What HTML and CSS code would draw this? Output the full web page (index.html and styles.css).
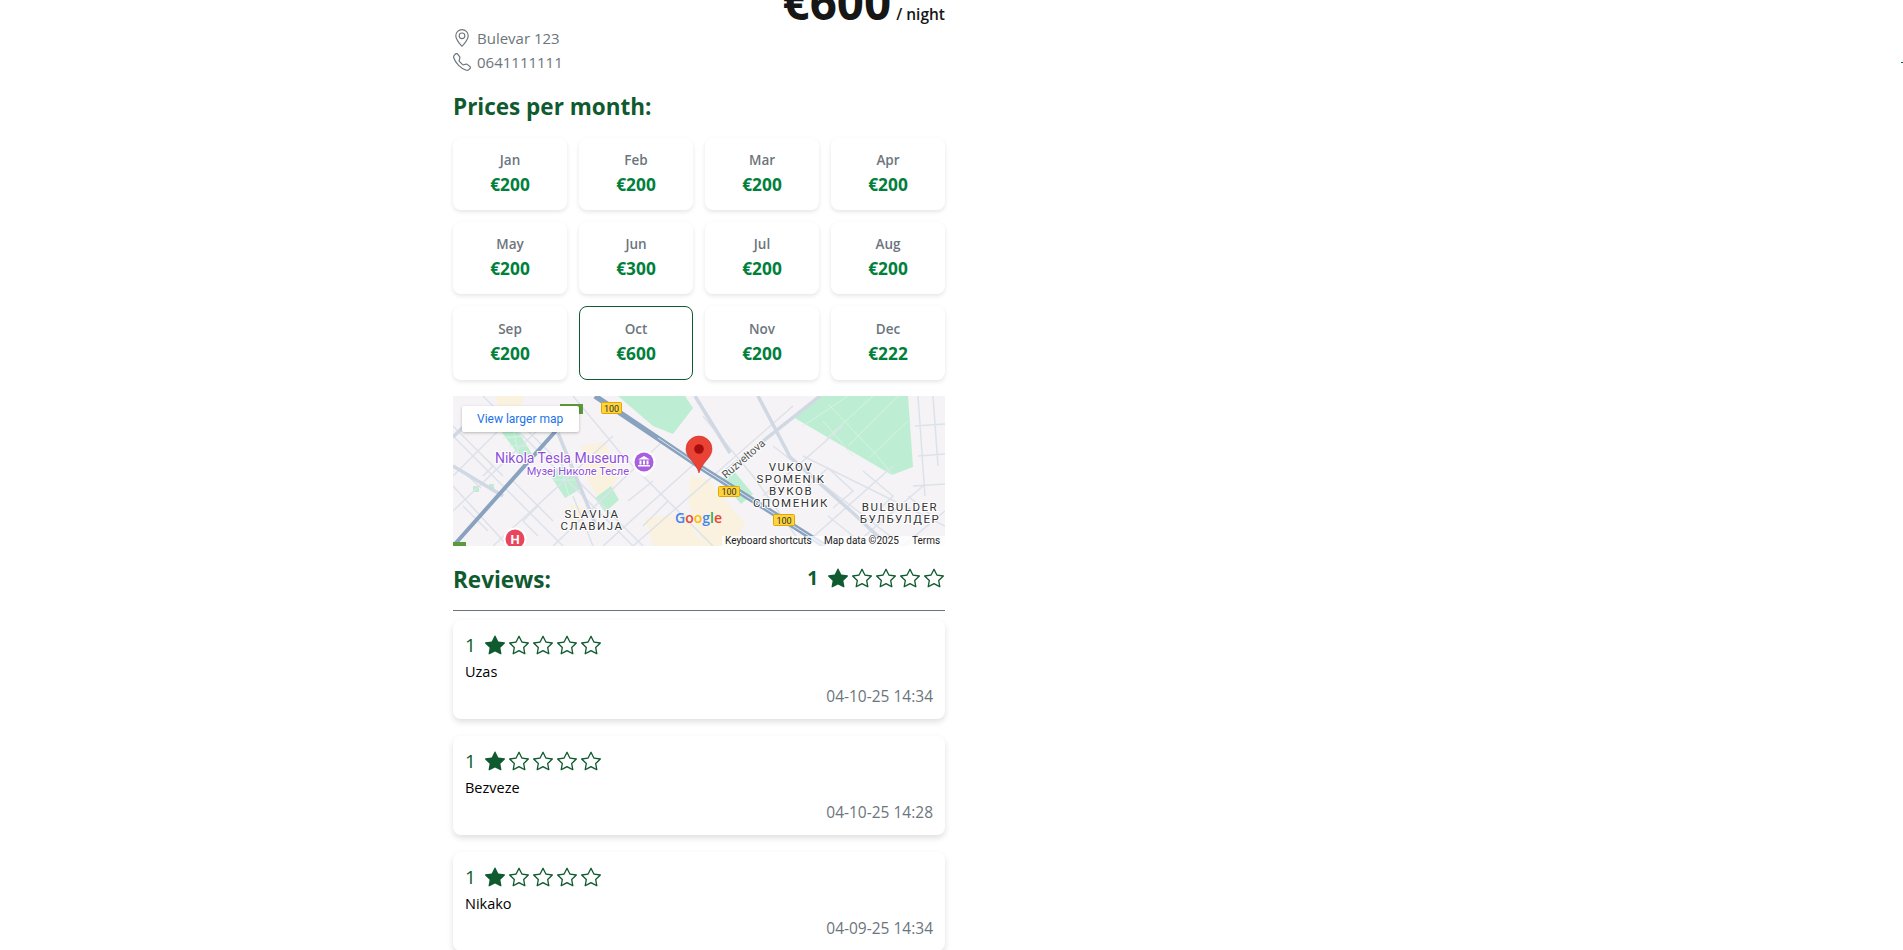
FILE: index.html

```html
<!DOCTYPE html>
<html lang="en">
<head>
    <meta charset="UTF-8">
    <title>Apartment details</title>
    <link rel="stylesheet" href="styles.css">
</head>
<body>
    <svg width="0" height="0" class="defs">
        <symbol id="star" viewBox="0 0 16 16"><path d="M2.866 14.85c-.078.444.36.791.746.593l4.39-2.256 4.389 2.256c.386.198.824-.149.746-.592l-.83-4.73 3.522-3.356c.33-.314.16-.888-.282-.95l-4.898-.696L8.465.792a.513.513 0 0 0-.927 0L5.354 5.12l-4.898.696c-.441.062-.612.636-.283.95l3.523 3.356-.83 4.73zm4.905-2.767-3.686 1.894.694-3.957a.565.565 0 0 0-.163-.505L1.71 6.745l4.052-.576a.525.525 0 0 0 .393-.288L8 2.223l1.847 3.658a.525.525 0 0 0 .393.288l4.052.575-2.906 2.77a.565.565 0 0 0-.163.506l.694 3.957-3.686-1.894a.503.503 0 0 0-.461 0z"/></symbol>
        <symbol id="star-fill" viewBox="0 0 16 16"><path d="M3.612 15.443c-.386.198-.824-.149-.746-.592l.83-4.73L.173 6.765c-.329-.314-.158-.888.283-.95l4.898-.696L7.538.792c.197-.39.73-.39.927 0l2.184 4.327 4.898.696c.441.062.612.636.282.95l-3.522 3.356.83 4.73c.078.443-.36.79-.746.592L8 13.187l-4.389 2.256z"/></symbol>
    </svg>

    <div class="page">
        <div class="price-row"><span class="price">€600</span><span class="per-night">/ night</span></div>

        <div class="contact">
            <svg class="contact-icon" viewBox="0 0 16 16"><path d="M12.166 8.94c-.524 1.062-1.234 2.12-1.96 3.07A31.493 31.493 0 0 1 8 14.58a31.481 31.481 0 0 1-2.206-2.57c-.726-.95-1.436-2.008-1.96-3.07C3.304 7.867 3 6.862 3 6a5 5 0 0 1 10 0c0 .862-.305 1.867-.834 2.94zM8 16s6-5.686 6-10A6 6 0 0 0 2 6c0 4.314 6 10 6 10z"/><path d="M8 8a2 2 0 1 1 0-4 2 2 0 0 1 0 4zm0 1a3 3 0 1 0 0-6 3 3 0 0 0 0 6z"/></svg>
            <span>Bulevar 123</span>
        </div>
        <div class="contact">
            <svg class="contact-icon" viewBox="0 0 16 16"><path d="M3.654 1.328a.678.678 0 0 0-1.015-.063L1.605 2.3c-.483.484-.661 1.169-.45 1.77a17.568 17.568 0 0 0 4.168 6.608 17.569 17.569 0 0 0 6.608 4.168c.601.211 1.286.033 1.77-.45l1.034-1.034a.678.678 0 0 0-.063-1.015l-2.307-1.794a.678.678 0 0 0-.58-.122l-2.19.547a1.745 1.745 0 0 1-1.657-.459L5.482 8.062a1.745 1.745 0 0 1-.46-1.657l.548-2.19a.678.678 0 0 0-.122-.58L3.654 1.328zM1.884.511a1.745 1.745 0 0 1 2.612.163L6.29 2.98c.329.423.445.974.315 1.494l-.547 2.19a.678.678 0 0 0 .178.643l2.457 2.457a.678.678 0 0 0 .644.178l2.189-.547a1.745 1.745 0 0 1 1.494.315l2.306 1.794c.829.645.905 1.87.163 2.611l-1.034 1.034c-.74.74-1.846 1.065-2.877.702a18.634 18.634 0 0 1-7.01-4.42 18.634 18.634 0 0 1-4.42-7.009c-.362-1.03-.037-2.137.703-2.877L1.885.511z"/></svg>
            <span>0641111111</span>
        </div>

        <h2 class="section-title months-title">Prices per month:</h2>
        <div class="months">
            <div class="month"><div class="month-name">Jan</div><div class="month-price">€200</div></div>
            <div class="month"><div class="month-name">Feb</div><div class="month-price">€200</div></div>
            <div class="month"><div class="month-name">Mar</div><div class="month-price">€200</div></div>
            <div class="month"><div class="month-name">Apr</div><div class="month-price">€200</div></div>
            <div class="month"><div class="month-name">May</div><div class="month-price">€200</div></div>
            <div class="month"><div class="month-name">Jun</div><div class="month-price">€300</div></div>
            <div class="month"><div class="month-name">Jul</div><div class="month-price">€200</div></div>
            <div class="month"><div class="month-name">Aug</div><div class="month-price">€200</div></div>
            <div class="month"><div class="month-name">Sep</div><div class="month-price">€200</div></div>
            <div class="month active"><div class="month-name">Oct</div><div class="month-price">€600</div></div>
            <div class="month"><div class="month-name">Nov</div><div class="month-price">€200</div></div>
            <div class="month"><div class="month-name">Dec</div><div class="month-price">€222</div></div>
        </div>

        <div class="map">
            <svg class="map-canvas" viewBox="0 0 492 150" width="492" height="150">
                <rect width="492" height="150" fill="#f5f3f5"/>
                <!-- parks and built-up areas -->
                <g fill="#faf2de">
                    <polygon points="128,50 152,46 165,80 150,110 135,85"/>
                    <polygon points="192,122 232,118 250,150 200,150"/>
                    <polygon points="237,80 256,84 292,128 280,150 250,150 236,108"/>
                    <polygon points="42,0 72,0 64,16 46,12"/>
                    <polygon points="118,108 132,112 130,128 116,124"/>
                </g>
                <g fill="#bdeed3">
                    <polygon points="340,21 367,0 455,0 460,71 439,79"/>
                    <polygon points="165,0 232,0 240,12 220,38 200,30"/>
                    <polygon points="47,34 62,30 79,58 68,62"/>
                    <polygon points="95,76 112,70 129,92 112,102"/>
                    <polygon points="268,84 280,74 300,98 288,108"/>
                    <polygon points="142,102 158,90 166,104 152,116"/>
                    <rect x="20" y="90" width="6" height="6"/>
                    <rect x="36" y="88" width="5" height="5"/>
                </g>
                <!-- paths across the parks -->
                <g stroke="#d6f3e2" stroke-width="1" fill="none">
                    <path d="M375 8 L420 55 L440 79 M395 0 L350 30 M420 0 L372 44 M445 0 L395 50 M455 25 L416 62 M370 25 L400 60"/>
                    <path d="M50 42 L72 40 M56 50 L76 50 M60 32 L66 60 M100 84 L124 84 M108 74 L116 100"/>
                </g>
                <!-- street grid -->
                <g stroke="#dde2ea" stroke-width="1.500" fill="none">
                    <path d="M0 40 L110 150 M0 90 L55 150 M30 0 L180 150 M70 30 L190 150 M120 0 L170 60 L260 150"/>
                    <path d="M0 80 L70 10 M0 115 L110 10 M40 150 L160 40 M100 150 L210 45 M150 150 L250 60 M180 150 L340 10"/>
                    <path d="M320 50 L450 150 M350 60 L492 130 M250 20 L300 80 L350 150"/>
                    <path d="M350 150 L440 70 M400 150 L470 90 M310 100 L390 30 M450 150 L492 115 M465 0 L472 100 M480 0 L485 70 M462 30 L492 28 M465 60 L492 58 M460 90 L492 88"/>
                    <path d="M0 30 L40 70 L30 80 M60 85 L100 125 M10 110 L35 135 M120 100 L140 150"/>
                    <path d="M355 90 L375 72 L400 95 L380 112 M410 75 L440 100 L425 115 M375 120 L400 140 M455 100 L485 125 M30 60 L50 80 M15 80 L28 92 M85 110 L70 125 L85 140 M175 105 L200 85 M190 130 L215 105"/>
                </g>
                <g stroke="#cfd8e3" stroke-width="3.500" fill="none">
                    <path d="M305 0 L337 61 L400 117 L430 145"/>
                    <path d="M270 77 L367 0"/>
                    <path d="M242 0 L277 57"/>
                    <path d="M105 37 L142 127"/>
                    <path d="M0 41 L25 17"/>
                    <path d="M0 70 L50 100"/>
                </g>
                <!-- main roads -->
                <g stroke="#88a2bf" fill="none">
                    <path d="M142 0 L252 74 L372 150" stroke-width="5.500"/>
                    <path d="M2 148 L125 10" stroke-width="4"/>
                </g>
                <path d="M205 42 L252 74 L372 150" stroke="#dfe6ee" stroke-width="1" fill="none"/>
                <!-- road shields -->
                <g>
                    <rect x="107" y="8" width="23" height="10" fill="#5b9a3c"/>
                    <rect x="0" y="146" width="13" height="6" fill="#5b9a3c"/>
                </g>
                <g fill="#fdd43b" stroke="#e0a800" stroke-width="1">
                    <rect x="148.500" y="6.500" width="20" height="11" rx="1"/>
                    <rect x="265.500" y="90.500" width="21" height="10" rx="1"/>
                    <rect x="320.500" y="118.500" width="21" height="11" rx="1"/>
                </g>
                <g class="map-shield-text">
                    <text x="158.500" y="15.500">100</text>
                    <text x="276" y="99">100</text>
                    <text x="331" y="128">100</text>
                </g>
                <!-- labels -->
                <g>
                    <text x="176" y="67" class="museum-en">Nikola Tesla Museum</text>
                    <text x="176" y="79" class="museum-sr">Музеј Николе Тесле</text>
                </g>
                <circle cx="191" cy="66" r="11.500" fill="#fff"/>
                <path d="M186 77 L191 81 L196 77 Z" fill="#fff"/>
                <circle cx="191" cy="66" r="9.500" fill="#a95ee0"/>
                <path d="M185 63.500 L191 60 L197 63.500 Z M186.500 64.500 h2 v4 h-2 Z M190 64.500 h2 v4 h-2 Z M193.500 64.500 h2 v4 h-2 Z M185 69 h12 v1.500 h-12 Z" fill="#fff"/>
                <g class="map-area">
                    <text x="139" y="122">SLAVIJA</text>
                    <text x="139" y="134">СЛАВИЈА</text>
                    <text x="338" y="75">VUKOV</text>
                    <text x="338" y="87">SPOMENIK</text>
                    <text x="338" y="99">ВУКОВ</text>
                    <text x="338" y="111">СПОМЕНИК</text>
                    <text x="447" y="115">BULBULDER</text>
                    <text x="447" y="127">БУЛБУЛДЕР</text>
                </g>
                <text class="map-street" transform="translate(273 83) rotate(-41)">Ruzveltova</text>
                <!-- hospital -->
                <circle cx="62" cy="143" r="11.500" fill="#fff"/>
                <circle cx="62" cy="143" r="9.500" fill="#e9455c"/>
                <text x="62" y="147.500" class="map-hospital">H</text>
                <!-- marker -->
                <path d="M246 77 C243 66 233 62 233 53 A13 13 0 0 1 259 53 C259 62 249 66 246 77 Z" fill="#ea4335" stroke="#c5221f" stroke-width=".5"/>
                <circle cx="246" cy="53" r="4.800" fill="#a50e0e"/>
                <text y="127" x="222" class="map-google"><tspan fill="#4285f4">G</tspan><tspan fill="#ea4335">o</tspan><tspan fill="#fbbc04">o</tspan><tspan fill="#4285f4">g</tspan><tspan fill="#34a853">l</tspan><tspan fill="#ea4335">e</tspan></text>
                <!-- attribution bar -->
                <rect x="269" y="140" width="223" height="10" fill="#fff" fill-opacity=".75"/>
                <g class="map-attr">
                    <text x="272" y="147.500">Keyboard shortcuts</text>
                    <text x="371" y="147.500">Map data ©2025</text>
                    <text x="459" y="147.500">Terms</text>
                </g>
            </svg>
            <div class="map-link">View larger map</div>
        </div>

        <div class="reviews-head">
            <h2 class="section-title">Reviews:</h2>
            <div class="rating rating-total">
                <span class="rating-num">1</span>
                <span class="stars">
                    <svg class="star"><use href="#star-fill"/></svg><svg class="star"><use href="#star"/></svg><svg class="star"><use href="#star"/></svg><svg class="star"><use href="#star"/></svg><svg class="star"><use href="#star"/></svg>
                </span>
            </div>
        </div>

        <div class="review">
            <div class="rating">
                <span class="rating-num">1</span>
                <span class="stars">
                    <svg class="star"><use href="#star-fill"/></svg><svg class="star"><use href="#star"/></svg><svg class="star"><use href="#star"/></svg><svg class="star"><use href="#star"/></svg><svg class="star"><use href="#star"/></svg>
                </span>
            </div>
            <div class="review-text">Uzas</div>
            <div class="review-date">04-10-25 14:34</div>
        </div>
        <div class="review">
            <div class="rating">
                <span class="rating-num">1</span>
                <span class="stars">
                    <svg class="star"><use href="#star-fill"/></svg><svg class="star"><use href="#star"/></svg><svg class="star"><use href="#star"/></svg><svg class="star"><use href="#star"/></svg><svg class="star"><use href="#star"/></svg>
                </span>
            </div>
            <div class="review-text">Bezveze</div>
            <div class="review-date">04-10-25 14:28</div>
        </div>
        <div class="review">
            <div class="rating">
                <span class="rating-num">1</span>
                <span class="stars">
                    <svg class="star"><use href="#star-fill"/></svg><svg class="star"><use href="#star"/></svg><svg class="star"><use href="#star"/></svg><svg class="star"><use href="#star"/></svg><svg class="star"><use href="#star"/></svg>
                </span>
            </div>
            <div class="review-text">Nikako</div>
            <div class="review-date">04-09-25 14:34</div>
        </div>
    </div>

    <div class="edge-mark"></div>
</body>
</html>
```

FILE: styles.css

```css
html, body {
    height: 100%;
    overflow: hidden;
}
body {
    margin: 0;
    background: #fff;
    font-family: "Open Sans", "Noto Sans", sans-serif;
    color: #212529;
}
.defs {
    position: absolute;
}
.page {
    width: 492px;
    margin-left: 453px;
}
.price-row {
    display: flex;
    justify-content: flex-end;
    align-items: baseline;
    gap: 5px;
    height: 48px;
    margin-top: -22px;
    line-height: 48px;
}
.price {
    font-size: 47.500px;
    font-weight: 700;
    color: #161616;
}
.per-night {
    font-size: 15.500px;
    font-weight: 600;
    color: #161616;
}
.contact {
    display: flex;
    align-items: center;
    gap: 6px;
    height: 24px;
    font-size: 15px;
    color: #6c757d;
}
.contact-icon {
    width: 18px;
    height: 18px;
    fill: #6c757d;
    flex: none;
}
.section-title {
    margin: 0;
    font-size: 22.500px;
    font-weight: 700;
    color: #0f5a2e;
}
.months-title {
    margin-top: 18px;
    line-height: 30px;
}
.months {
    display: grid;
    grid-template-columns: repeat(4, 1fr);
    gap: 12px;
    margin-top: 16px;
}
.month {
    display: flex;
    flex-direction: column;
    align-items: center;
    justify-content: center;
    gap: 4px;
    min-height: 72px;
    padding-bottom: 2px;
    box-sizing: border-box;
    border-radius: 8px;
    background: #fff;
    box-shadow: 0 2px 4px rgba(0,0,0,0.1);
}
.month.active {
    min-height: 74px;
    border: 1px solid #0f5a2e;
    box-shadow: none;
}
.month-name {
    font-size: 13.500px;
    font-weight: 600;
    color: #6c757d;
}
.month-price {
    font-size: 17.300px;
    font-weight: 700;
    color: #00803a;
}
.map {
    position: relative;
    height: 150px;
    margin-top: 16px;
}
.map-canvas {
    display: block;
}
.map-link {
    position: absolute;
    left: 9px;
    top: 10px;
    width: 117px;
    height: 26px;
    box-sizing: border-box;
    padding-left: 15px;
    border-radius: 2px;
    background: #fff;
    box-shadow: 0 1px 3px rgba(0,0,0,0.25);
    font-family: Roboto, sans-serif;
    font-size: 12px;
    line-height: 26px;
    color: #1a73e8;
}
.map-shield-text text {
    font-family: Roboto, sans-serif;
    font-size: 9px;
    text-anchor: middle;
    fill: #333;
}
.museum-en {
    font-family: Roboto, sans-serif;
    font-size: 14px;
    text-anchor: end;
    fill: #8f4fd8;
    paint-order: stroke;
    stroke: #fff;
    stroke-width: 2px;
}
.museum-sr {
    font-family: Roboto, sans-serif;
    font-size: 11px;
    text-anchor: end;
    fill: #8f4fd8;
    paint-order: stroke;
    stroke: #fff;
    stroke-width: 2px;
}
.map-area text {
    font-family: Roboto, sans-serif;
    font-size: 11.500px;
    letter-spacing: 1.500px;
    text-anchor: middle;
    fill: #333;
    paint-order: stroke;
    stroke: #fff;
    stroke-width: 2px;
}
.map-street {
    font-family: Roboto, sans-serif;
    font-size: 11px;
    fill: #555;
    paint-order: stroke;
    stroke: #fff;
    stroke-width: 2px;
}
.map-hospital {
    font-family: Roboto, sans-serif;
    font-size: 13px;
    font-weight: 700;
    text-anchor: middle;
    fill: #fff;
}
.map-google {
    font-family: "Open Sans", sans-serif;
    font-size: 14px;
    font-weight: 600;
}
.map-attr text {
    font-family: Roboto, sans-serif;
    font-size: 10px;
    fill: #222;
}
.reviews-head {
    display: flex;
    justify-content: space-between;
    align-items: center;
    height: 62px;
    padding-top: 2px;
    border-bottom: 1px solid #6c757d;
}
.reviews-head .rating {
    margin-top: -2px;
}
.rating {
    display: flex;
    align-items: center;
    gap: 9px;
    font-size: 19px;
    color: #0f5a2e;
}
.rating-total {
    gap: 10px;
    font-weight: 700;
    margin-right: 1px;
}
.stars {
    display: flex;
    gap: 4px;
}
.star {
    width: 20px;
    height: 20px;
    fill: #0f5a2e;
}
.review {
    margin-top: 9px;
    margin-bottom: 17px;
    padding: 12px 12px 10px;
    height: 99px;
    box-sizing: border-box;
    border-radius: 8px;
    background: #fff;
    box-shadow: 0 3px 6px rgba(0,0,0,0.13);
}
.review + .review {
    margin-top: 0;
}
.review-text {
    margin-top: 4px;
    font-size: 14.500px;
    color: #000;
}
.review-date {
    margin-top: 4px;
    text-align: right;
    font-size: 15.500px;
    color: #6c757d;
}
.edge-mark {
    position: absolute;
    right: 0;
    top: 62px;
    width: 2px;
    height: 1px;
    background: #0f5a2e;
}
```
